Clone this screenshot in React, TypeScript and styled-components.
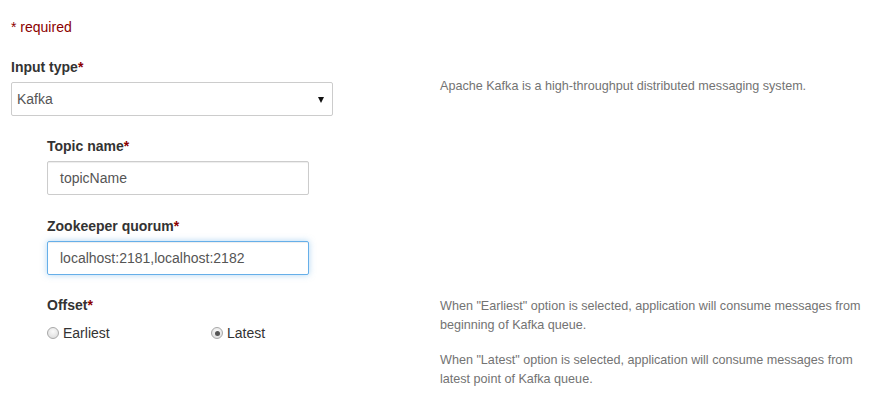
import React from "react";
import styled, { createGlobalStyle } from "styled-components";

const Global = createGlobalStyle`
  html, body { margin: 0; padding: 0; background: #fff; }
  body {
    font-family: "Liberation Sans", Arial, Helvetica, sans-serif;
    font-size: 14px;
    line-height: 20px;
    color: #333;
  }
  * { box-sizing: border-box; }
`;

const Page = styled.div`
  padding: 17px 4px 0 11px;
`;

const Required = styled.div`
  color: #8b0000;
  margin-bottom: 20px;
`;

const Row = styled.div<{ $gap?: number }>`
  display: grid;
  grid-template-columns: 429px 1fr;
  margin-bottom: ${(p) => p.$gap ?? 20}px;
`;

const Field = styled.div<{ $indent?: boolean; $w: number }>`
  display: flex;
  flex-direction: column;
  margin-left: ${(p) => (p.$indent ? "36px" : "0")};
  width: ${(p) => p.$w}px;
`;

const Label = styled.label`
  font-weight: bold;
  margin-bottom: 5px;
  display: block;
`;

const Star = styled.span`
  color: #8b0000;
`;

const Help = styled.div<{ $top?: number }>`
  font-size: 12.6px;
  line-height: 19px;
  color: #737373;
  padding-top: ${(p) => p.$top ?? 0}px;
`;

const HelpPara = styled.p`
  margin: 0 0 16px 0;
  &:last-child { margin-bottom: 0; }
`;

const SelectBox = styled.div`
  height: 34px;
  border: 1px solid #ccc;
  border-radius: 2px;
  display: flex;
  align-items: center;
  justify-content: space-between;
  padding: 0 8px 0 5px;
  color: #555;
  background: #fff;
`;

const Arrow = styled.span`
  width: 0;
  height: 0;
  border-left: 3.5px solid transparent;
  border-right: 3.5px solid transparent;
  border-top: 6px solid #111;
  margin-top: 1px;
`;

const TextInput = styled.div<{ $focus?: boolean }>`
  height: 34px;
  border: 1px solid ${(p) => (p.$focus ? "#66afe9" : "#ccc")};
  border-radius: 2px;
  padding: 0 12px;
  display: flex;
  align-items: center;
  color: #555;
  box-shadow: ${(p) =>
    p.$focus
      ? "inset 0 1px 1px rgba(0,0,0,.075), 0 0 6px rgba(102,175,233,.5)"
      : "inset 0 1px 1px rgba(0,0,0,.075)"};
`;

const Radios = styled.div`
  display: grid;
  grid-template-columns: 164px 164px;
  margin-top: 3px;
`;

const RadioLabel = styled.label`
  display: flex;
  align-items: center;
  gap: 4px;
`;

const RadioDot = styled.span<{ $checked?: boolean }>`
  width: 12px;
  height: 12px;
  border-radius: 50%;
  border: 1px solid #a8a8a8;
  background: radial-gradient(circle at 50% 35%, #fafafa, #d8d8d8);
  display: inline-flex;
  align-items: center;
  justify-content: center;
  &::after {
    content: "";
    width: 5px;
    height: 5px;
    border-radius: 50%;
    background: ${(p) => (p.$checked ? "#555" : "transparent")};
  }
`;

export default function App() {
  return (
    <>
      <Global />
      <Page>
        <Required>* required</Required>

        <Row>
          <Field $w={322}>
            <Label>
              Input type<Star>*</Star>
            </Label>
            <SelectBox>
              <span>Kafka</span>
              <Arrow />
            </SelectBox>
          </Field>
          <Help $top={20}>Apache Kafka is a high-throughput distributed messaging system.</Help>
        </Row>

        <Row $gap={21}>
          <Field $indent $w={262}>
            <Label>
              Topic name<Star>*</Star>
            </Label>
            <TextInput>topicName</TextInput>
          </Field>
        </Row>

        <Row>
          <Field $indent $w={262}>
            <Label>
              Zookeeper quorum<Star>*</Star>
            </Label>
            <TextInput $focus>localhost:2181,localhost:2182</TextInput>
          </Field>
        </Row>

        <Row>
          <Field $indent $w={328}>
            <Label>
              Offset<Star>*</Star>
            </Label>
            <Radios>
              <RadioLabel>
                <RadioDot />
                Earliest
              </RadioLabel>
              <RadioLabel>
                <RadioDot $checked />
                Latest
              </RadioLabel>
            </Radios>
          </Field>
          <Help $top={2}>
            <HelpPara>
              When "Earliest" option is selected, application will consume messages from beginning of Kafka queue.
            </HelpPara>
            <HelpPara>When "Latest" option is selected, application will consume messages from latest point of Kafka queue.</HelpPara>
          </Help>
        </Row>
      </Page>
    </>
  );
}
